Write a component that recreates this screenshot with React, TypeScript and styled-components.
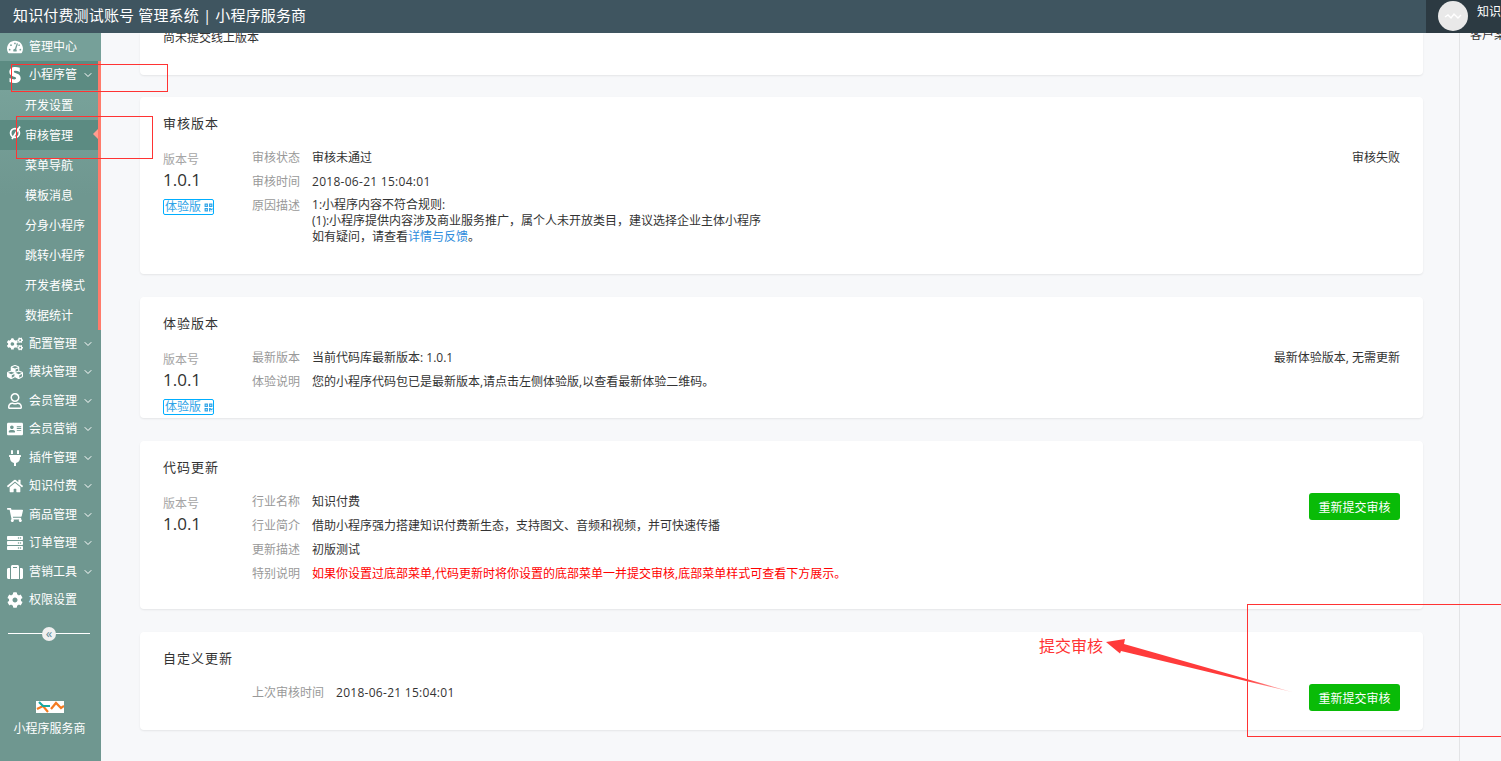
import React from 'react';
import styled, { createGlobalStyle } from 'styled-components';
import {
  FaAddressCard,
  FaCog,
  FaCogs,
  FaCubes,
  FaHome,
  FaPlug,
  FaQrcode,
  FaRegUser,
  FaServer,
  FaShoppingCart,
  FaStripeS,
  FaSuitcase,
  FaTachometerAlt,
} from 'react-icons/fa';
import { ChevronDown } from 'lucide-react';

const GlobalStyle = createGlobalStyle`
  html, body {
    margin: 0;
    height: 100%;
    overflow: hidden;
    background: #f7f8fa;
    font-family: "Open Sans", "Noto Sans CJK SC", sans-serif;
    font-size: 12px;
    color: #333;
  }
  * { box-sizing: border-box; }
`;

const Page = styled.div`
  position: relative;
  width: 1501px;
  height: 761px;
  display: flex;
  flex-direction: column;
  overflow: hidden;
`;

const Header = styled.header`
  flex: 0 0 33px;
  display: flex;
  justify-content: space-between;
  background: #3f5560;
  color: #fff;
  z-index: 2;
`;

const HeaderTitle = styled.div`
  padding-left: 13px;
  font-size: 15px;
  line-height: 31px;
  letter-spacing: 0.15px;
`;

const UserBox = styled.div`
  width: 75px;
  display: flex;
  gap: 9px;
  padding: 1px 0 0 12px;
  background: #2c3a42;
  overflow: hidden;
  white-space: nowrap;
`;

const Avatar = styled.div`
  flex: 0 0 30px;
  height: 30px;
  border-radius: 50%;
  background: #e9e9e9;
  display: flex;
  align-items: center;
  justify-content: center;
`;

const UserName = styled.span`
  line-height: 21px;
`;

const Body = styled.div`
  flex: 1;
  display: flex;
  min-height: 0;
`;

const Sidebar = styled.aside`
  flex: 0 0 101px;
  width: 101px;
  min-width: 0;
  display: flex;
  flex-direction: column;
  background: #6f9790;
  color: #fff;
`;

const TopItem = styled.div`
  height: 28px;
  display: flex;
  align-items: center;
  background: #76a099;
`;

const NavGroup = styled.div`
  border-right: 3px solid #ff7b6b;
  background: linear-gradient(180deg, #78a29a 10%, #6f9790 50%);
`;

const NavItem = styled.div<{ $open?: boolean }>`
  height: ${({ $open }) => ($open ? '29px' : '28.5px')};
  padding-bottom: 1px;
  display: flex;
  align-items: center;
  background: ${({ $open }) => ($open ? '#5c8b82' : 'transparent')};
`;

const NavIcon = styled.span`
  flex: 0 0 29px;
  display: flex;
  justify-content: center;
  font-size: 16px;
`;

const NavLabel = styled.span`
  flex: 0 0 48px;
  line-height: 16px;
  white-space: nowrap;
`;

const Chevron = styled.span`
  flex: 0 1 22px;
  display: flex;
  justify-content: center;
`;

const SubItem = styled.div<{ $active?: boolean }>`
  position: relative;
  height: 30px;
  padding: 0 0 1px 25px;
  display: flex;
  align-items: center;
  background: ${({ $active }) => ($active ? '#5c8b82' : 'transparent')};

  ${({ $active }) =>
    $active &&
    `
    &::after {
      content: '';
      position: absolute;
      right: 0;
      top: 9px;
      border: 5px solid transparent;
      border-right-color: #ff9d90;
      border-left-width: 0;
    }
  `}
`;

const SubIcon = styled.svg`
  position: absolute;
  left: 9px;
  top: 6px;
  width: 13px;
  height: 14px;
`;

const Collapse = styled.div`
  margin: 18px 11px 0 8px;
  height: 1px;
  background: #fff;
  display: flex;
  align-items: center;
  justify-content: center;
`;

const CollapseKnob = styled.span`
  width: 14px;
  height: 14px;
  flex: 0 0 14px;
  border-radius: 50%;
  background: #f0f0f0;
  color: #5f8a9a;
  font-size: 13px;
  line-height: 12px;
  text-align: center;
`;

const Brand = styled.div`
  margin-top: 67px;
  padding-right: 2px;
  display: flex;
  flex-direction: column;
  align-items: center;
  gap: 8px;
  line-height: 16px;
`;

const BrandLogo = styled.svg`
  width: 28px;
  height: 12px;
  display: block;
`;

const Main = styled.main`
  flex: 1;
  display: flex;
  min-width: 0;
  overflow: hidden;
`;

const Content = styled.div`
  flex: 0 0 1358px;
  display: flex;
  flex-direction: column;
  gap: 23px;
  padding: 0 36px 0 39px;
`;

const Card = styled.section<{ $height: number }>`
  height: ${({ $height }) => $height}px;
  padding: 16px 23px 0;
  background: #fff;
  border-radius: 4px;
  box-shadow: 0 1px 2px rgba(0, 0, 0, 0.08);
`;

const ClippedCard = styled.section`
  height: 42px;
  margin-bottom: -1px;
  padding: 0 23px 29px;
  display: flex;
  align-items: flex-end;
  background: #fff;
  border-radius: 0 0 4px 4px;
  box-shadow: 0 1px 2px rgba(0, 0, 0, 0.08);
  line-height: 16px;
`;

const CardTitle = styled.h3`
  margin: 0 0 12px;
  font-size: 13px;
  font-weight: 400;
  line-height: 20px;
  letter-spacing: 1px;
  color: #333;
`;

const CardBody = styled.div`
  display: flex;
  align-items: flex-start;
`;

const VersionColumn = styled.div`
  flex: 0 0 89px;
  display: flex;
  flex-direction: column;
  align-items: flex-start;
  padding-top: 7px;
`;

const VersionLabel = styled.span`
  line-height: 16px;
  color: #a5a5a5;
`;

const VersionNumber = styled.span`
  font-size: 17px;
  line-height: 23px;
  color: #333;
`;

const Tag = styled.span`
  margin-top: 8px;
  width: 51px;
  height: 16px;
  padding-left: 1px;
  display: flex;
  align-items: center;
  gap: 3px;
  border: 1px solid #00aeff;
  border-radius: 2px;
  color: #2fa4e7;
  line-height: 14px;
  font-size: 12px;
`;

const TagIcon = styled(FaQrcode)`
  font-size: 9px;
`;

const InfoList = styled.div`
  flex: 1;
  padding-top: 1px;
`;

const InfoRow = styled.div`
  display: flex;
  gap: 12px;
  line-height: 24px;
`;

const InfoLabel = styled.span`
  color: #999;
  white-space: nowrap;
`;

const InfoValue = styled.span<{ $alert?: boolean; $multiline?: boolean }>`
  color: ${({ $alert }) => ($alert ? '#f00' : '#333')};
  ${({ $multiline }) => $multiline && 'line-height: 16px; padding-top: 3px;'}
`;

const DateText = styled.span`
  letter-spacing: 0.28px;
`;

const Link = styled.a`
  color: #2d8cdc;
  text-decoration: none;
`;

const StatusText = styled.span`
  padding-top: 1px;
  line-height: 24px;
  color: #333;
`;

const GreenButton = styled.button`
  margin-top: 4px;
  width: 91px;
  height: 27px;
  padding: 0;
  border: 0;
  border-radius: 3px;
  background: #09bb07;
  color: #fff;
  font: inherit;
  cursor: pointer;
`;

const Rail = styled.div`
  flex: 1;
  padding-left: 10px;
  border-left: 1px solid #e3e4e6;
  overflow: hidden;
  white-space: nowrap;
  line-height: 16px;
`;

const RailText = styled.div`
  margin-top: -6px;
`;

const Mark = styled.div`
  position: absolute;
  border: 1px solid #f33;
  pointer-events: none;
  z-index: 3;
`;

const MenuMark = styled(Mark)`
  left: 11px;
  top: 64px;
  width: 157px;
  height: 28px;
`;

const ReviewMark = styled(Mark)`
  left: 16px;
  top: 116px;
  width: 137px;
  height: 43px;
`;

const SubmitMark = styled(Mark)`
  left: 1247px;
  top: 604px;
  width: 260px;
  height: 133px;
`;

const SubmitNote = styled.div`
  position: absolute;
  left: 1039px;
  top: 634px;
  font-size: 16px;
  line-height: 24px;
  color: #f33;
  z-index: 3;
`;

const ArrowLayer = styled.svg`
  position: absolute;
  left: 0;
  top: 0;
  width: 1501px;
  height: 761px;
  pointer-events: none;
  z-index: 3;
`;

const menus = [
  { label: '配置管理', icon: <FaCogs /> },
  { label: '模块管理', icon: <FaCubes /> },
  { label: '会员管理', icon: <FaRegUser /> },
  { label: '会员营销', icon: <FaAddressCard /> },
  { label: '插件管理', icon: <FaPlug /> },
  { label: '知识付费', icon: <FaHome /> },
  { label: '商品管理', icon: <FaShoppingCart /> },
  { label: '订单管理', icon: <FaServer /> },
  { label: '营销工具', icon: <FaSuitcase /> },
];

const subMenus = ['开发设置', '审核管理', '菜单导航', '模板消息', '分身小程序', '跳转小程序', '开发者模式', '数据统计'];

const VersionInfo: React.FC<{ tag?: boolean }> = ({ tag }) => (
  <VersionColumn>
    <VersionLabel>版本号</VersionLabel>
    <VersionNumber>1.0.1</VersionNumber>
    {tag && (
      <Tag>
        体验版
        <TagIcon />
      </Tag>
    )}
  </VersionColumn>
);

const App: React.FC = () => (
  <Page>
    <GlobalStyle />
    <Header>
      <HeaderTitle>知识付费测试账号 管理系统 | 小程序服务商</HeaderTitle>
      <UserBox>
        <Avatar>
          <svg width="18" height="8" viewBox="0 0 18 8" fill="none" stroke="#fff" strokeWidth="1.4">
            <path d="M1 5l3-2 3 3 3-4 4 4 3-3" />
          </svg>
        </Avatar>
        <UserName>知识付费测试账号</UserName>
      </UserBox>
    </Header>
    <Body>
      <Sidebar>
        <TopItem>
          <NavIcon>
            <FaTachometerAlt />
          </NavIcon>
          <NavLabel>管理中心</NavLabel>
        </TopItem>
        <NavGroup>
          <NavItem $open>
            <NavIcon>
              <FaStripeS />
            </NavIcon>
            <NavLabel>小程序管</NavLabel>
            <Chevron>
              <ChevronDown size={12} strokeWidth={2} />
            </Chevron>
          </NavItem>
          {subMenus.map((name) => (
            <SubItem key={name} $active={name === '审核管理'}>
              {name === '审核管理' && (
                <SubIcon viewBox="0 0 13 14" fill="none" stroke="#fff" strokeWidth="1.8">
                  <circle cx="6" cy="7" r="4.4" />
                  <path d="M11 0.5L3 13" />
                </SubIcon>
              )}
              {name}
            </SubItem>
          ))}
        </NavGroup>
        {menus.map((menu) => (
          <NavItem key={menu.label}>
            <NavIcon>{menu.icon}</NavIcon>
            <NavLabel>{menu.label}</NavLabel>
            <Chevron>
              <ChevronDown size={12} strokeWidth={2} />
            </Chevron>
          </NavItem>
        ))}
        <NavItem>
          <NavIcon>
            <FaCog />
          </NavIcon>
          <NavLabel>权限设置</NavLabel>
        </NavItem>
        <Collapse>
          <CollapseKnob>«</CollapseKnob>
        </Collapse>
        <Brand>
          <BrandLogo viewBox="0 0 28 12">
            <rect width="28" height="12" fill="#fff" />
            <path d="M1 8L7 5l5 6" fill="none" stroke="#f47b20" strokeWidth="2.2" />
            <path d="M3 1l4 4h7" fill="none" stroke="#17a9a2" strokeWidth="2.2" />
            <path d="M15 8l5-6 5 5 3-2" fill="none" stroke="#f47b20" strokeWidth="2.2" />
          </BrandLogo>
          小程序服务商
        </Brand>
      </Sidebar>
      <Main>
        <Content>
          <ClippedCard>尚未提交线上版本</ClippedCard>

          <Card $height={177}>
            <CardTitle>审核版本</CardTitle>
            <CardBody>
              <VersionInfo tag />
              <InfoList>
                <InfoRow>
                  <InfoLabel>审核状态</InfoLabel>
                  <InfoValue>审核未通过</InfoValue>
                </InfoRow>
                <InfoRow>
                  <InfoLabel>审核时间</InfoLabel>
                  <InfoValue>
                    <DateText>2018-06-21 15:04:01</DateText>
                  </InfoValue>
                </InfoRow>
                <InfoRow>
                  <InfoLabel>原因描述</InfoLabel>
                  <InfoValue $multiline>
                    1:小程序内容不符合规则:
                    <br />
                    (1):小程序提供内容涉及商业服务推广，属个人未开放类目，建议选择企业主体小程序
                    <br />
                    如有疑问，请查看<Link>详情与反馈</Link>。
                  </InfoValue>
                </InfoRow>
              </InfoList>
              <StatusText>审核失败</StatusText>
            </CardBody>
          </Card>

          <Card $height={121}>
            <CardTitle>体验版本</CardTitle>
            <CardBody>
              <VersionInfo tag />
              <InfoList>
                <InfoRow>
                  <InfoLabel>最新版本</InfoLabel>
                  <InfoValue>当前代码库最新版本: 1.0.1</InfoValue>
                </InfoRow>
                <InfoRow>
                  <InfoLabel>体验说明</InfoLabel>
                  <InfoValue>您的小程序代码包已是最新版本,请点击左侧体验版,以查看最新体验二维码。</InfoValue>
                </InfoRow>
              </InfoList>
              <StatusText>最新体验版本, 无需更新</StatusText>
            </CardBody>
          </Card>

          <Card $height={168}>
            <CardTitle>代码更新</CardTitle>
            <CardBody>
              <VersionInfo />
              <InfoList>
                <InfoRow>
                  <InfoLabel>行业名称</InfoLabel>
                  <InfoValue>知识付费</InfoValue>
                </InfoRow>
                <InfoRow>
                  <InfoLabel>行业简介</InfoLabel>
                  <InfoValue>借助小程序强力搭建知识付费新生态，支持图文、音频和视频，并可快速传播</InfoValue>
                </InfoRow>
                <InfoRow>
                  <InfoLabel>更新描述</InfoLabel>
                  <InfoValue>初版测试</InfoValue>
                </InfoRow>
                <InfoRow>
                  <InfoLabel>特别说明</InfoLabel>
                  <InfoValue $alert>如果你设置过底部菜单,代码更新时将你设置的底部菜单一并提交审核,底部菜单样式可查看下方展示。</InfoValue>
                </InfoRow>
              </InfoList>
              <GreenButton>重新提交审核</GreenButton>
            </CardBody>
          </Card>

          <Card $height={98}>
            <CardTitle>自定义更新</CardTitle>
            <CardBody>
              <VersionColumn />
              <InfoList>
                <InfoRow>
                  <InfoLabel>上次审核时间</InfoLabel>
                  <InfoValue>
                    <DateText>2018-06-21 15:04:01</DateText>
                  </InfoValue>
                </InfoRow>
              </InfoList>
              <GreenButton>重新提交审核</GreenButton>
            </CardBody>
          </Card>
        </Content>
        <Rail>
          <RailText>客户案例</RailText>
        </Rail>
      </Main>
    </Body>

    <MenuMark />
    <ReviewMark />
    <SubmitMark />
    <SubmitNote>提交审核</SubmitNote>
    <ArrowLayer viewBox="0 0 1501 761">
      <defs>
        <linearGradient id="arrowFade" x1="1106" y1="642" x2="1292" y2="692" gradientUnits="userSpaceOnUse">
          <stop offset="0.75" stopColor="#ff3b3b" />
          <stop offset="1" stopColor="#ffc4c4" />
        </linearGradient>
      </defs>
      <polygon points="1106,642 1125,639 1124,644 1292,692 1121,651 1120,653.5" fill="url(#arrowFade)" />
    </ArrowLayer>
  </Page>
);

export default App;
